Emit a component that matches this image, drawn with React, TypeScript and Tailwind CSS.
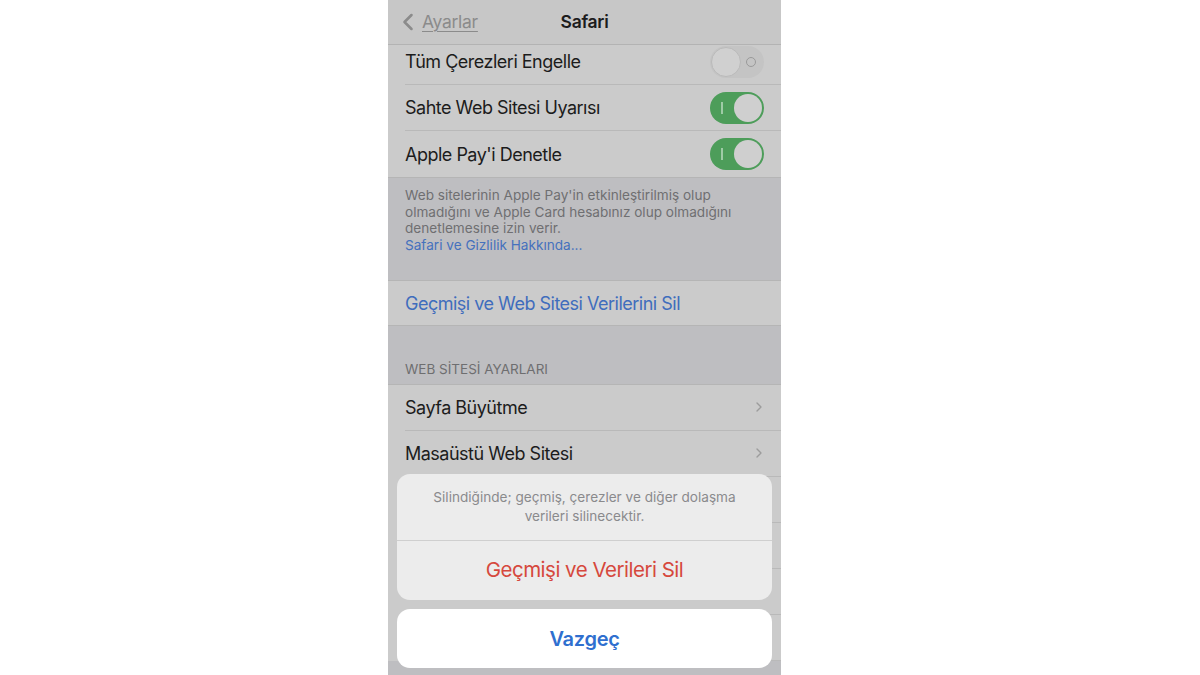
import { ChevronLeft, ChevronRight } from "lucide-react";

const font = { fontFamily: "Inter, 'Noto Sans', sans-serif" };

function Toggle({ on }: { on: boolean }) {
  if (on) {
    return (
      <div className="relative h-[32px] w-[54px] rounded-full bg-[#4d9d5a]">
        <div className="absolute left-[11px] top-[10px] h-[12px] w-[1.5px] bg-[#9fcba6]" />
        <div className="absolute right-[2px] top-[2px] h-[28px] w-[28px] rounded-full bg-[#cfcfcf]" />
      </div>
    );
  }
  return (
    <div className="relative h-[32px] w-[54px] rounded-full bg-[#c4c4c4]">
      <div className="absolute right-[8px] top-[11px] h-[10px] w-[10px] rounded-full border border-[#9a9a9a]" />
      <div className="absolute left-[1px] top-[1px] h-[30px] w-[30px] rounded-full border border-[#bababa] bg-[#d0d0d0]" />
    </div>
  );
}

function Row({ label, right, last }: { label?: string; right?: React.ReactNode; last?: boolean }) {
  return (
    <div className="flex h-[46px] items-stretch bg-[#cbcbcb] pl-[17px]">
      <div
        className={`flex flex-1 items-center justify-between pr-[17px] ${last ? "" : "border-b border-[#b9b9b9]"}`}
      >
        <span className="text-[18px] tracking-[-0.5px] text-[#1c1c1c]">{label}</span>
        {right}
      </div>
    </div>
  );
}

function Chevron() {
  return <ChevronRight className="-mr-[3px] h-[16px] w-[16px] text-[#9c9c9c]" strokeWidth={2} />;
}

export default function App() {
  return (
    <div className="flex h-[675px] w-full bg-white pl-[388px]" style={font}>
      <div className="relative h-[675px] w-[393px] overflow-hidden bg-[#bebec1]">
        {/* nav bar */}
        <div className="relative z-10 flex h-[45px] items-center border-b border-[#b3b3b3] bg-[#c7c7c7]">
          <div className="flex items-center pl-[6px] text-[#8b8b8b]">
            <ChevronLeft className="h-[28px] w-[28px]" strokeWidth={2.2} />
            <span className="text-[17.5px] tracking-[-0.3px] underline decoration-1 underline-offset-[3px]">Ayarlar</span>
          </div>
          <span className="absolute left-1/2 -translate-x-1/2 text-[17.5px] font-semibold tracking-[-0.3px] text-[#1c1c1c]">
            Safari
          </span>
        </div>

        <div className="-mt-[6px] border-b border-[#b5b5b5]">
          <Row label="Tüm Çerezleri Engelle" right={<Toggle on={false} />} />
          <Row label="Sahte Web Sitesi Uyarısı" right={<Toggle on />} />
          <Row label="Apple Pay'i Denetle" right={<Toggle on />} last />
        </div>

        <div className="px-[17px] pb-[27px] pt-[9px] text-[13.6px] leading-[16.6px] text-[#6f6f71]">
          <p>Web sitelerinin Apple Pay'in etkinleştirilmiş olup olmadığını ve Apple Card hesabınız olup olmadığını denetlemesine izin verir.</p>
          <p className="text-[#4571bd]">Safari ve Gizlilik Hakkında...</p>
        </div>

        <div className="flex h-[46px] items-center border-y border-[#b5b5b5] bg-[#cbcbcb] pl-[17px]">
          <span className="text-[18px] tracking-[-0.5px] text-[#3f6dbd]">Geçmişi ve Web Sitesi Verilerini Sil</span>
        </div>

        <div className="px-[17px] pb-[4px] pt-[33px] text-[13.5px] text-[#6e6e70]">WEB SİTESİ AYARLARI</div>

        <div className="border-t border-[#b5b5b5]">
          <Row label="Sayfa Büyütme" right={<Chevron />} />
          <Row label="Masaüstü Web Sitesi" right={<Chevron />} />
          <Row />
          <Row />
          <Row />
          <Row />
        </div>

        {/* action sheet */}
        <div className="absolute bottom-[7px] left-[9px] right-[9px] flex flex-col gap-[9px]">
          <div className="overflow-hidden rounded-[13px] bg-[#ececec]">
            <div className="border-b border-[#cfcfcf] px-[16px] pb-[14px] pt-[14px] text-center text-[13.6px] leading-[19px] text-[#8a8a8c]">
              Silindiğinde; geçmiş, çerezler ve diğer dolaşma
              <br />
              verileri silinecektir.
            </div>
            <div className="flex h-[59px] items-center justify-center text-[20.5px] tracking-[-0.5px] text-[#d6483d]">
              Geçmişi ve Verileri Sil
            </div>
          </div>
          <div className="flex h-[59px] items-center justify-center rounded-[13px] bg-white text-[20px] font-semibold tracking-[-0.3px] text-[#2f6fcf]">
            Vazgeç
          </div>
        </div>
      </div>
    </div>
  );
}
